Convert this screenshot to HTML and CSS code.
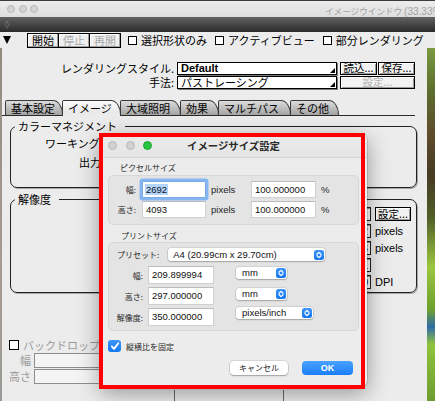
FILE: index.html
```html
<!DOCTYPE html>
<html lang="ja">
<head>
<meta charset="utf-8">
<title>イメージウインドウ</title>
<link rel="stylesheet" href="styles.css">
</head>
<body>
<div class="screen">
  <header class="titlebar">
    <div class="lights"><span></span><span></span><span></span></div>
    <div class="wintitle">イメージウインドウ <span class="pctt">(33.33%)</span></div>
  </header>
  <div class="darkbar"><span class="grip">◊</span></div>
  <div class="toolbar">
    <span class="disclose"></span>
    <div class="btngroup">
      <span class="tbtn">開始</span><span class="tbtn off">停止</span><span class="tbtn off">再開</span>
    </div>
    <label class="chk"><span class="box"></span>選択形状のみ</label>
    <label class="chk"><span class="box"></span>アクティブビュー</label>
    <label class="chk"><span class="box"></span>部分レンダリング</label>
  </div>
  <div class="content">
    <div class="edge"></div>
    <div class="panel">
      <div class="frow">
        <span class="flabel">レンダリングスタイル.</span>
        <span class="popup"><b class="latin">Default</b><i class="tri"></i></span>
        <span class="cbtn">読込...</span>
        <span class="cbtn tight">保存...</span>
      </div>
      <div class="frow">
        <span class="flabel">手法:</span>
        <span class="popup">パストレーシング<i class="tri"></i></span>
        <span class="cbtn wide off">設定...</span>
      </div>
      <div class="tabs">
        <span class="tab t1">基本設定</span>
        <span class="tab t2 on">イメージ</span>
        <span class="tab t3">大域照明</span>
        <span class="tab t4">効果</span>
        <span class="tab t5">マルチパス</span>
        <span class="tab t6">その他</span>
      </div>
      <fieldset class="group g1">
        <legend>カラーマネジメント</legend>
        <div class="grow r1">ワーキング</div>
        <div class="grow r2">出力</div>
      </fieldset>
      <fieldset class="group g2">
        <legend>解像度</legend>
        <div class="rrow"><span class="rinput sel"><i class="tri"></i></span><span class="cbtn rbtn">設定...</span></div>
        <div class="rrow"><span class="rinput">2692</span><span class="unit">pixels</span></div>
        <div class="rrow"><span class="rinput">4093</span><span class="unit">pixels</span></div>
        <div class="rrow"><span class="rinput">1</span><span class="unit"></span></div>
        <div class="rrow"><span class="rinput">350</span><span class="unit">DPI</span></div>
      </fieldset>
      <div class="backdrop">
        <div class="bdcheck"><span class="box"></span>バックドロップ</div>
        <div class="bdrow"><span class="bdlabel">幅</span><span class="bdinput"></span></div>
        <div class="bdrow"><span class="bdlabel">高さ</span><span class="bdinput"></span></div>
      </div>
      <div class="cols"><span class="c1"></span><span class="c2"></span><span class="c3"></span></div>
    </div>
    <div class="render"></div>
  </div>

  <div class="dialog">
    <div class="dtitle">
      <div class="dlights"><span></span><span></span><span class="green"></span></div>
      <div class="dname">イメージサイズ設定</div>
      <div></div>
    </div>
    <div class="dbody">
      <div class="seclabel">ピクセルサイズ</div>
      <div class="dbox pixbox">
        <span class="dl jp">幅:</span>
        <span class="field focus"><span class="hl">2692</span></span>
        <span class="unitd">pixels</span>
        <span class="field">100.000000</span>
        <span class="pct">%</span>
        <span class="dl jp">高さ:</span>
        <span class="field">4093</span>
        <span class="unitd">pixels</span>
        <span class="field">100.000000</span>
        <span class="pct">%</span>
      </div>
      <div class="seclabel sec2">プリントサイズ</div>
      <div class="dbox printbox">
        <div class="preset">
          <span class="jp">プリセット:</span>
          <span class="pop wide">A4 (20.99cm x 29.70cm)<span class="step"><svg viewBox="0 0 10 10" width="10" height="10"><path d="M3 4.3 L5 2.4 L7 4.3 M3 5.7 L5 7.6 L7 5.7" fill="none" stroke="#fff" stroke-width="1.2" stroke-linecap="round" stroke-linejoin="round"/></svg></span></span>
        </div>
        <div class="pgrid">
          <span class="dl jp">幅:</span>
          <span class="field">209.899994</span>
          <span class="pop mm">mm<span class="step"><svg viewBox="0 0 10 10" width="10" height="10"><path d="M3 4.3 L5 2.4 L7 4.3 M3 5.7 L5 7.6 L7 5.7" fill="none" stroke="#fff" stroke-width="1.2" stroke-linecap="round" stroke-linejoin="round"/></svg></span></span>
          <span class="dl jp">高さ:</span>
          <span class="field">297.000000</span>
          <span class="pop mm">mm<span class="step"><svg viewBox="0 0 10 10" width="10" height="10"><path d="M3 4.3 L5 2.4 L7 4.3 M3 5.7 L5 7.6 L7 5.7" fill="none" stroke="#fff" stroke-width="1.2" stroke-linecap="round" stroke-linejoin="round"/></svg></span></span>
          <span class="dl jp">解像度:</span>
          <span class="field">350.000000</span>
          <span class="pop ppi">pixels/inch<span class="step"><svg viewBox="0 0 10 10" width="10" height="10"><path d="M3 4.3 L5 2.4 L7 4.3 M3 5.7 L5 7.6 L7 5.7" fill="none" stroke="#fff" stroke-width="1.2" stroke-linecap="round" stroke-linejoin="round"/></svg></span></span>
        </div>
      </div>
      <div class="keep">
        <span class="dcheck"><svg viewBox="0 0 12 12" width="12" height="12"><path d="M2.8 6.4 L5 8.9 L9.3 3.2" fill="none" stroke="#fff" stroke-width="1.8" stroke-linecap="round" stroke-linejoin="round"/></svg></span>
        <span class="jp">縦横比を固定</span>
      </div>
      <div class="dbtns">
        <span class="dbtn cancel jp">キャンセル</span>
        <span class="dbtn ok">OK</span>
      </div>
    </div>
  </div>
  <div class="highlight"></div>
</div>
</body>
</html>
```
FILE: styles.css
```css
* { box-sizing: border-box; }
html, body { margin: 0; padding: 0; }
body {
  font-family: "Noto Sans CJK JP", "Noto Sans", sans-serif;
  font-size: 11px;
  color: #000;
  background: #ececec;
}
.screen {
  position: relative;
  width: 435px;
  height: 401px;
  overflow: hidden;
  background: #ececec;
}

/* window title bar */
.titlebar {
  height: 17px;
  border-top: 1px solid #3c3c3c;
  background: linear-gradient(#ececec, #dedede);
  display: flex;
  align-items: center;
  white-space: nowrap;
  overflow: hidden;
}
.lights { display: flex; gap: 3.5px; padding-left: 7px; flex: none; }
.lights span {
  width: 8px; height: 8px; border-radius: 50%;
  background: #d3d3d3; border: 0.5px solid #b9b9b9;
}
.wintitle {
  margin-left: 287px;
  padding-top: 5px;
  font-size: 8.6px;
  line-height: 11px;
  color: #a3a3a3;
  flex: none;
}
.pctt { font-family: "Liberation Sans", sans-serif; font-size: 10px; }
.darkbar {
  height: 15px;
  background: linear-gradient(#626262, #2b2b2b);
  display: flex;
  align-items: center;
  padding-left: 5px;
}
.grip { font-family: "DejaVu Sans", sans-serif; font-size: 8px; color: #8e8e8e; line-height: 8px; }

/* toolbar */
.toolbar {
  height: 16px;
  display: flex;
  align-items: center;
  white-space: nowrap;
  padding-left: 3px;
}
.disclose {
  width: 0; height: 0;
  border-left: 4.5px solid transparent;
  border-right: 4.5px solid transparent;
  border-top: 8px solid #000;
  margin-right: 16px;
}
.btngroup { display: flex; }
.tbtn {
  width: 32px; height: 15px;
  border: 1px solid #000;
  margin-right: -1px;
  text-align: center;
  line-height: 12px;
  background: #efefef;
  box-shadow: inset -1px -1px 0 #a0a0a0, inset 1px 1px 0 #fff;
}
.tbtn.off { color: #a9a9a9; }
.chk { display: flex; align-items: center; line-height: 13px; margin-left: 8px; }
.box {
  width: 9px; height: 9px;
  border: 1px solid #000;
  background: #fff;
  margin-right: 4px;
}

/* content */
.content { display: flex; height: 353px; }
.edge { width: 2px; background: linear-gradient(#8f8c7e, #a69a92 60%, #9b9a96); }
.panel { width: 425px; padding-top: 14px; }
.render {
  width: 8px;
  background: linear-gradient(180deg, #7b9a40 0%, #5c6e2e 12%, #5f4c2c 24%, #463b24 36%, #4f5e28 48%, #9cc63e 62%, #6ea22e 74%, #2e6aa6 79%, #91c43c 84%, #6c9c30 100%);
}

.frow { display: flex; height: 13px; margin-bottom: 1px; white-space: nowrap; }
.flabel { width: 175px; text-align: right; padding-right: 3px; line-height: 12px; }
.popup {
  width: 160px; height: 13px;
  border: 1px solid #000;
  background: #fff;
  box-shadow: 1px 1px 0 #7a7a7a;
  display: flex;
  align-items: center;
  padding-left: 3px;
  line-height: 11px;
}
.latin { font-family: "Liberation Sans", sans-serif; font-size: 11px; }
.tri {
  margin-left: auto;
  align-self: flex-end;
  margin-bottom: 1px; margin-right: 1px;
  width: 0; height: 0;
  border-left: 5px solid transparent;
  border-bottom: 5px solid #000;
}
.cbtn {
  width: 37px; height: 13px;
  margin-left: 3px;
  border: 1px solid #000;
  background: #f2f2f2;
  box-shadow: inset 1px 1px 0 #fff, inset -1px -1px 0 #9a9a9a;
  text-align: center;
  line-height: 10px;
  font-size: 10.5px;
}
.cbtn.tight { margin-left: 1px; }
.cbtn.wide { width: 75px; }
.cbtn.off { color: #b2b2b2; }

/* tabs */
.tabs {
  display: flex;
  margin: 11px 12px 0 0;
  padding-left: 3px;
  height: 16px;
  border-bottom: 1px solid #2a2a2a;
  white-space: nowrap;
}
.tab {
  height: 15px;
  padding: 0 0 0 5px;
  border: 1px solid #3a3a3a;
  border-bottom: none;
  border-top-right-radius: 10px 15px;
  border-top-left-radius: 2px;
  background: linear-gradient(#dcdcdc, #a3a3a3);
  line-height: 14px;
  margin-right: -1px;
  flex: none;
}
.t1 { width: 58px; }
.t2 { width: 59px; }
.t3 { width: 61px; }
.t4 { width: 39px; }
.t5 { width: 73px; }
.t6 { width: 49px; }
.tab.on {
  height: 16px;
  background: linear-gradient(#fbfbfb, #e9e9e9 70%, #ececec);
  position: relative;
  z-index: 1;
}

/* group boxes */
.group {
  margin: 3px 10px 0 8px;
  padding: 0;
  border: 1px solid #222;
  border-radius: 7px;
  box-shadow: 1px 1px 0 #a8a8a8;
  min-width: 0;
}
.group legend {
  margin-left: 4px;
  padding: 0 8px 0 3px;
  line-height: 14px;
}
.g1 { height: 69px; }
.grow { line-height: 14px; white-space: nowrap; }
.g1 .r1 { margin-top: 3px; padding-left: 34px; }
.g1 .r2 { margin-top: 5px; padding-left: 68px; }
.g2 { margin-top: 4px; height: 101px; padding-right: 5px; }
.rrow {
  display: flex;
  justify-content: flex-end;
  height: 14px;
  margin-top: 3px;
  white-space: nowrap;
}
.g2 .rrow:first-of-type { margin-top: 1px; }
.rinput {
  width: 70px; height: 14px;
  border: 1px solid #222;
  background: #fff;
  box-shadow: inset 1px 1px 0 #999;
  text-align: right;
  padding-right: 2px;
  font-family: "Liberation Sans", sans-serif;
  font-size: 11px;
  line-height: 12px;
}
.rinput.sel { display: flex; padding-left: 3px; }
.unit {
  width: 36px;
  margin-left: 4px;
  font-family: "Liberation Sans", sans-serif;
  font-size: 11px;
  line-height: 14px;
}
.rbtn { width: 36px; margin-left: 4px; height: 14px; line-height: 11px; }

/* backdrop */
.backdrop { margin-top: 46px; color: #9b9b9b; }
.bdcheck { display: flex; align-items: center; padding-left: 7px; height: 12px; line-height: 12px; white-space: nowrap; }
.bdcheck .box { width: 10px; height: 10px; }
.bdrow { display: flex; height: 15px; margin-top: 1px; }
.bdcheck + .bdrow { margin-top: 2px; }
.bdlabel { width: 29px; text-align: right; line-height: 14px; font-size: 11px; }
.bdinput {
  width: 130px; height: 15px; margin-left: 3px;
  border: 1px solid #8d8d8d;
  background: #f4f4f4;
}
.cols { display: flex; margin-top: 6px; height: 14px; }
.cols .c1 { width: 172px; }
.cols .c2 { width: 109px; border-left: 1px solid #6a6a6a; }
.cols .c3 { flex: 1; border-left: 1px solid #6a6a6a; }

/* dialog */
.dialog {
  position: absolute;
  left: 100px; top: 134px;
  width: 267px; height: 253px;
  background: #ececec;
  border-radius: 6px;
  box-shadow: 0 0 0 0.5px rgba(0,0,0,0.25), 0 6px 22px rgba(0,0,0,0.38);
  font-family: "Liberation Sans", "Noto Sans CJK JP", sans-serif;
  font-size: 9.5px;
  color: #1e1e1e;
  white-space: nowrap;
}
.jp { font-family: "Noto Sans CJK JP", sans-serif; font-size: 8px; }
.dtitle {
  height: 24px;
  border-bottom: 1px solid #d3d3d3;
  background: linear-gradient(#ebebeb, #e5e5e5);
  border-radius: 6px 6px 0 0;
  display: grid;
  grid-template-columns: 1fr auto 1fr;
  align-items: center;
}
.dlights { display: flex; gap: 8.5px; padding-left: 8px; }
.dlights span {
  width: 9px; height: 9px; border-radius: 50%;
  background: #d0d0d0; border: 0.5px solid #b8b8b8;
}
.dlights .green { background: #27c440; border-color: #1ea735; }
.dname {
  font-family: "Noto Sans CJK JP", sans-serif;
  font-size: 10.4px;
  font-weight: bold;
  color: #2a2a2a;
  line-height: 12px;
  margin-top: 1px;
}
.dbody { padding: 0 8px; }
.seclabel { font-family: "Noto Sans CJK JP", sans-serif; font-size: 8px; line-height: 10px; margin-top: 5px; padding-left: 12px; color: #2a2a2a; }
.sec2 { margin-top: 6px; padding-left: 13px; }
.dbox {
  border: 1px solid #d7d7d7;
  background: #e4e4e4;
  border-radius: 5px;
}
.pixbox {
  margin-top: 2px;
  height: 50px;
  padding-top: 4px;
  display: grid;
  grid-template-columns: 27px 70px 45px 65px auto;
  grid-template-rows: 18px 18px;
  row-gap: 2px;
  align-items: center;
}
.dl { text-align: right; color: #2a2a2a; }
.pixbox .field:nth-child(2), .pixbox .field:nth-child(7) { margin-left: 6px; width: 64px; }
.field {
  height: 17px;
  background: #fff;
  border: 1px solid #d0d0d0;
  border-top-color: #bcbcbc;
  padding-left: 3px;
  line-height: 15px;
  color: #111;
}
.field.focus {
  box-shadow: 0 0 0 2.5px #86b6f2;
  border-color: #7aa9e8;
  border-radius: 1px;
  padding-left: 2px;
}
.hl { background: #b4d6fe; padding: 0 1px; }
.unitd { padding-left: 5px; }
.pct { padding-left: 5px; }
.printbox { margin-top: 1px; height: 89px; padding-top: 5px; }
.preset { display: flex; align-items: center; height: 13px; padding-left: 8px; }
.preset .pop { margin-left: 9px; }
.pop {
  height: 13px;
  background: #fff;
  border-radius: 3px;
  box-shadow: 0 0 0 0.5px rgba(0,0,0,0.16), 0 1px 1.5px rgba(0,0,0,0.22);
  display: flex;
  align-items: center;
  justify-content: space-between;
  padding: 0 1.5px 0 6px;
  line-height: 12px;
  color: #111;
}
.pop.wide { width: 157px; padding-left: 5px; }
.pop.mm { width: 51px; align-self: start; margin-top: 1px; height: 12px; }
.pop.ppi { width: 77px; align-self: start; margin-top: -1px; height: 12px; }
.step {
  width: 10px; height: 10px;
  border-radius: 2.5px;
  background: linear-gradient(#3b95fb, #1476ee);
  display: flex;
}
.pgrid {
  margin-top: 5px;
  display: grid;
  grid-template-columns: 34px 5px 66px 22px auto;
  grid-template-rows: 18px 18px 18px;
  row-gap: 3px;
  align-items: center;
}
.pgrid .dl { grid-column: 1; }
.pgrid .field { grid-column: 3; height: 18px; }
.pgrid .pop { grid-column: 5; justify-self: start; }
.keep { display: flex; align-items: center; margin-top: 9px; height: 12px; }
.dcheck {
  width: 13px; height: 12px;
  border-radius: 3px;
  background: linear-gradient(#3a95fb, #1478f0);
  display: flex;
  align-items: center;
  justify-content: center;
  margin-right: 5px;
}
.keep .jp { color: #2a2a2a; }
.dbtns { display: flex; justify-content: flex-end; margin-top: 9px; padding-right: 6px; gap: 14px; }
.dbtn {
  height: 14px;
  border-radius: 4px;
  text-align: center;
  line-height: 14px;
}
.cancel {
  width: 58px;
  background: #fff;
  box-shadow: 0 0 0 0.5px rgba(0,0,0,0.18), 0 1px 1.5px rgba(0,0,0,0.25);
  color: #222;
}
.ok {
  width: 51px;
  background: linear-gradient(#4aa2ff, #1b7ef6);
  color: #fff;
  font-weight: bold;
  font-size: 9px;
}
.highlight {
  position: absolute;
  left: 99px; top: 133px;
  width: 266px; height: 256px;
  border: 4px solid #ff0000;
}
```
